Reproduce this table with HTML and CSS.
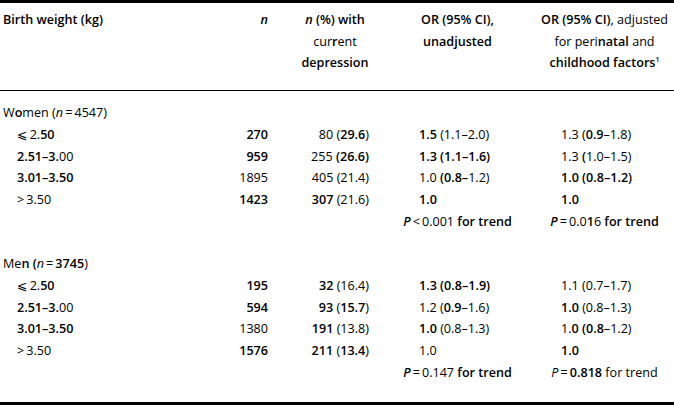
FILE: index.html
```html
<!DOCTYPE html>
<html lang="en">
<head>
<meta charset="utf-8">
<title>Birth weight and depression</title>
<link rel="stylesheet" href="styles.css">
</head>
<body>
<table class="tbl">
  <colgroup>
    <col class="c1"><col class="c2"><col class="c3"><col class="c4"><col class="c5">
  </colgroup>
  <thead>
    <tr>
      <th class="label"><b>Birth weight (kg)</b></th>
      <th class="num"><b><i>n</i></b></th>
      <th class="ctr"><b><i>n</i> (%) with</b><br>cur<b>r</b>ent<br><b>depression</b></th>
      <th class="ctr"><b>OR (95% CI),</b><br><b>unadjusted</b></th>
      <th class="ctr"><b>OR (95% CI)</b>, adjusted<br>for peri<b>natal</b> and<br><b>childhood factors<sup>1</sup></b></th>
    </tr>
  </thead>
  <tbody>
    <tr class="first">
      <td class="label">W<b>o</b>men (<i>n</i>&thinsp;=&thinsp;4547)</td><td></td><td></td><td></td><td></td>
    </tr>
    <tr>
      <td class="sub">⩽&thinsp;2.<b>50</b></td>
      <td class="num"><b>270</b></td>
      <td class="pct">80 (<b>29.6</b>)</td>
      <td class="or"><b>1.5</b> (1.1–2.0)</td>
      <td class="adj">1.3 (<b>0.9</b>–1.8)</td>
    </tr>
    <tr>
      <td class="sub"><b>2.51–3.</b>00</td>
      <td class="num"><b>959</b></td>
      <td class="pct">255 <b>(26.6)</b></td>
      <td class="or"><b>1.3 (1.1–1.6)</b></td>
      <td class="adj">1.3 <b>(</b>1.0–1.5)</td>
    </tr>
    <tr>
      <td class="sub"><b>3.01–3.50</b></td>
      <td class="num">1895</td>
      <td class="pct">405 (21.4)</td>
      <td class="or">1.0 <b>(0.8–</b>1.2)</td>
      <td class="adj"><b>1.0 (0.8–1.2)</b></td>
    </tr>
    <tr>
      <td class="sub">&gt;&thinsp;3.50</td>
      <td class="num"><b>1423</b></td>
      <td class="pct"><b>307</b> (21.6)</td>
      <td class="or"><b>1.0</b></td>
      <td class="adj"><b>1.0</b></td>
    </tr>
    <tr>
      <td></td><td></td><td></td>
      <td class="trend"><b><i>P</i></b>&thinsp;&lt;&thinsp;0.001 <b>for trend</b></td>
      <td class="trend"><b><i>P</i></b>&thinsp;=&thinsp;0.0<b>1</b>6 <b>for trend</b></td>
    </tr>
    <tr class="gap"><td colspan="5"></td></tr>
    <tr>
      <td class="label">Me<b>n (</b><i>n</i>&thinsp;=&thinsp;<b>3745</b>)</td><td></td><td></td><td></td><td></td>
    </tr>
    <tr>
      <td class="sub">⩽&thinsp;2.<b>50</b></td>
      <td class="num"><b>195</b></td>
      <td class="pct"><b>32</b> (16.4)</td>
      <td class="or"><b>1.3 (0.8–1.9)</b></td>
      <td class="adj">1.1 (0.7–1.7)</td>
    </tr>
    <tr>
      <td class="sub"><b>2.51–3.</b>00</td>
      <td class="num"><b>594</b></td>
      <td class="pct"><b>93</b> (<b>15.7</b>)</td>
      <td class="or">1.2 (<b>0.9</b>–1.6)</td>
      <td class="adj"><b>1.0</b> (0.8–1.3)</td>
    </tr>
    <tr>
      <td class="sub"><b>3.01–3.50</b></td>
      <td class="num">1380</td>
      <td class="pct"><b>191</b> (13.8)</td>
      <td class="or"><b>1.0</b> (0.8–1.3)</td>
      <td class="adj">1.<b>0 (0.8</b>–1.2)</td>
    </tr>
    <tr>
      <td class="sub">&gt;&thinsp;3.50</td>
      <td class="num"><b>1576</b></td>
      <td class="pct"><b>211</b> (<b>13.4</b>)</td>
      <td class="or">1.0</td>
      <td class="adj"><b>1.0</b></td>
    </tr>
    <tr class="last">
      <td></td><td></td><td></td>
      <td class="trend"><b><i>P</i></b>&thinsp;=&thinsp;0.147 <b>for trend</b></td>
      <td class="trend"><i>P</i>&thinsp;=&thinsp;<b>0.818</b> for trend</td>
    </tr>
  </tbody>
</table>
</body>
</html>
```

FILE: styles.css
```css
html, body {
  margin: 0;
  padding: 0;
  background: #fff;
}
body {
  font-family: "Open Sans", "Lato", "DejaVu Sans", sans-serif;
  font-size: 12.6px;
  color: #000;
}
.tbl {
  width: 674px;
  border-collapse: collapse;
  table-layout: fixed;
  border-top: 3px solid #000;
  border-bottom: 3px solid #000;
}
.c1 { width: 200px; }
.c2 { width: 90px; }
.c3 { width: 90px; }
.c4 { width: 155px; }
.c5 { width: 139px; }
th, td {
  padding: 0;
  line-height: 21.7px;
  white-space: nowrap;
  vertical-align: top;
  font-weight: normal;
}
b { font-weight: 600; }
thead th {
  padding-top: 6px;
  padding-bottom: 16px;
  border-bottom: 1px solid #000;
}
sup {
  font-size: 7px;
  line-height: 0;
  vertical-align: 5px;
}
.label { text-align: left; padding-left: 3px; }
.sub { text-align: left; padding-left: 17px; }
.num { text-align: right; padding-right: 22px; }
.ctr { text-align: center; }
.pct { text-align: right; padding-right: 11px; }
.or { text-align: left; padding-left: 39px; }
.adj { text-align: left; padding-left: 26px; }
.trend { text-align: center; }
tr.first td { padding-top: 11px; }
tr.gap td { height: 21px; }
tr.last td { padding-bottom: 18px; }
```
